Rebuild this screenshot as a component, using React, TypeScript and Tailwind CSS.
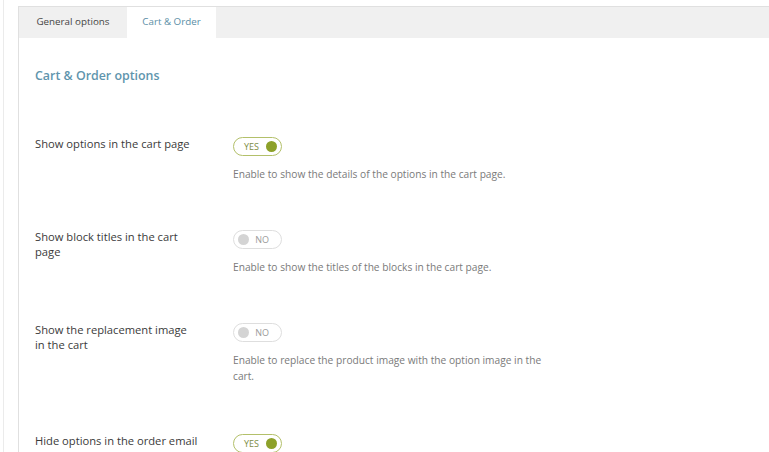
import React from "react";

function Toggle({ on }: { on: boolean }) {
  if (on) {
    return (
      <div className="flex h-[19px] w-[49px] items-center justify-between rounded-full border border-[#b3c06a] bg-white pl-[10px] pr-[4px]">
        <span className="text-[9px] leading-none text-[#7d8c44]">YES</span>
        <span className="h-[11px] w-[11px] rounded-full bg-[#8da12a]" />
      </div>
    );
  }
  return (
    <div className="flex h-[19px] w-[49px] items-center justify-between rounded-full border border-[#dedede] bg-white pl-[4px] pr-[12px]">
      <span className="h-[11px] w-[11px] rounded-full bg-[#d4d4d4]" />
      <span className="text-[9px] leading-none text-[#9a9a9a]">NO</span>
    </div>
  );
}

function Row({
  label,
  on,
  desc,
  className,
  nowrap,
}: {
  label: React.ReactNode;
  on: boolean;
  desc?: string;
  className?: string;
  nowrap?: boolean;
}) {
  return (
    <div className={"flex " + (className ?? "")}>
      <div
        className={
          "w-[198px] shrink-0 pr-[40px] text-[11.2px] leading-[15px] text-[#3a3a3a] " +
          (nowrap ? "whitespace-nowrap" : "")
        }
      >
        {label}
      </div>
      <div className="flex flex-col pt-[1px]">
        <Toggle on={on} />
        {desc && (
          <p className="mt-[10px] max-w-[322px] text-[10.2px] leading-[16px] text-[#7a7a7a]">
            {desc}
          </p>
        )}
      </div>
    </div>
  );
}

export default function App() {
  return (
    <div
      className="h-[452px] w-[769px] overflow-hidden bg-white pl-[3px]"
      style={{ fontFamily: '"Open Sans", "Noto Sans", sans-serif' }}
    >
      <div className="h-full border-l border-[#ebebeb] pl-[14px] pt-[6px]">
        <div className="h-full border-l border-t border-[#e0e0e0]">
          <div className="flex h-[31px] bg-[#f0f0f0]">
            <div className="flex w-[108px] items-center justify-center text-[9.8px] text-[#444]">
              General options
            </div>
            <div className="flex w-[89px] items-center justify-center bg-white text-[9.8px] text-[#5a8ea6]">
              Cart &amp; Order
            </div>
          </div>
          <div className="pl-[16px] pt-[28px]">
            <h2 className="text-[12.4px] font-semibold leading-[20px] text-[#5f95ad]">
              Cart &amp; Order options
            </h2>
            <Row
              className="mt-[50px]"
              label="Show options in the cart page"
              on={true}
              desc="Enable to show the details of the options in the cart page."
            />
            <Row
              className="mt-[47px]"
              label="Show block titles in the cart page"
              on={false}
              desc="Enable to show the titles of the blocks in the cart page."
            />
            <Row
              className="mt-[47px]"
              label="Show the replacement image in the cart"
              on={false}
              desc="Enable to replace the product image with the option image in the cart."
            />
            <Row
              className="mt-[49px]"
              label="Hide options in the order email"
              on={true}
              nowrap
            />
          </div>
        </div>
      </div>
    </div>
  );
}
